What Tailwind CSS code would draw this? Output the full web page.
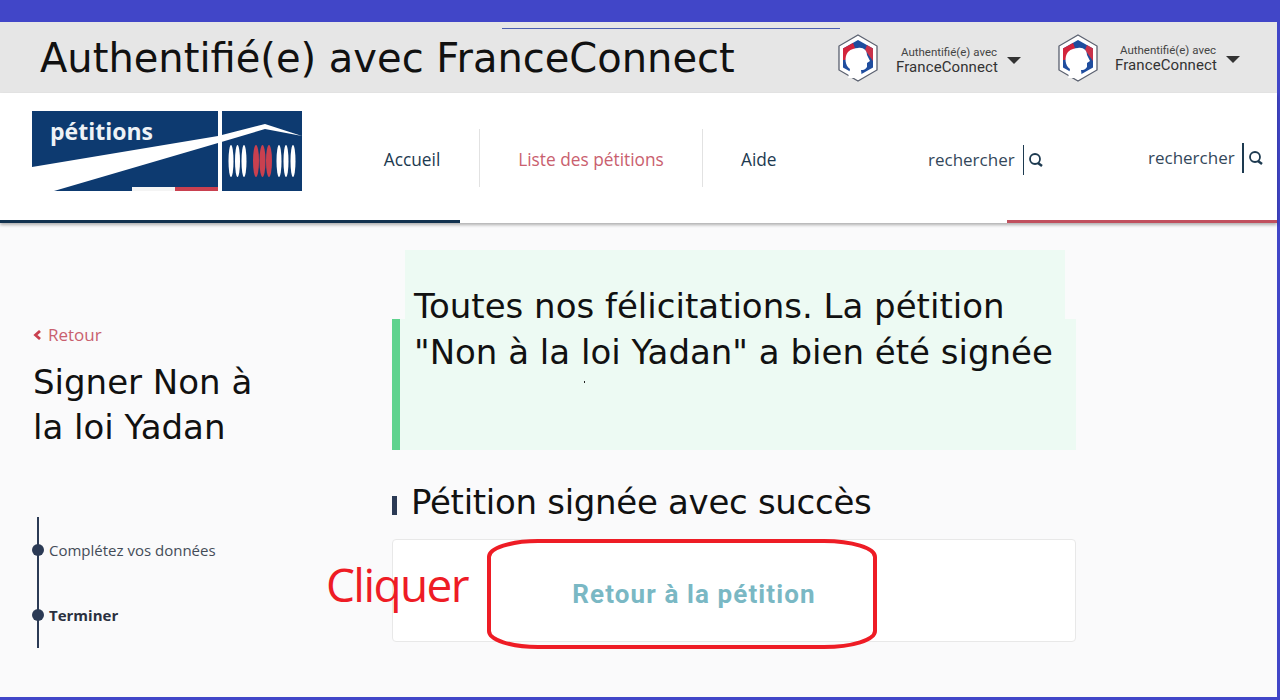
<!DOCTYPE html>
<html lang="fr">
  <head>
    <meta charset="UTF-8" />
    <title>Pétition signée</title>
    <script src="https://cdn.jsdelivr.net/npm/@tailwindcss/browser@4"></script>
  </head>
  <body class="w-[1280px] h-[700px] overflow-hidden bg-[#4146c8] font-['Open_Sans',sans-serif]">
    <div class="relative mt-[22px] mr-[3px] h-[675px] bg-[#fafafb]">
      <!-- FranceConnect bar -->
      <div class="relative flex items-center h-[71px] bg-[#e6e6e6]">
        <div class="absolute left-[502px] top-[6px] w-[338px] h-px bg-[#4a5fb0]"></div>
        <h2 class="ml-[40px] w-[796px] shrink-0 font-['DejaVu_Sans',sans-serif] text-[40px] leading-[46px] text-[#111]">Authentifié(e) avec FranceConnect</h2>
        <div class="flex items-center w-[220px] shrink-0 mt-[1px]">
          <svg class="w-[44px] h-[50px] shrink-0" viewBox="0 0 44 50">
            <path d="M22 2 41 13V37L22 48 3 37V13Z" fill="#fff" stroke="#5b6170" stroke-width="1.3" />
            <path d="M22 7 37 15.500V34.500L22 43 7 34.500V15.500Z" fill="#1f4d9e" />
            <path d="M7 15.500 17 10 19 15 9 27 7 27Z" fill="#d3243c" />
            <path d="M37 15.500 31 12 29 17 37 28Z" fill="#c8324a" />
            <path d="M22 15C27 14 31 17 31 22L34 28 31 30V34C29 37 27 37 25 37L26 45H12L14 36C9 33 8 24 12 19 15 16 19 15 22 15Z" fill="#fff" />
          </svg>
          <div class="ml-[14px] mt-[6px] w-[106px] shrink-0 text-center">
            <div class="pl-[4px] font-['Roboto',sans-serif] text-[11.500px] leading-[13px] text-[#444]">Authentifié(e) avec</div>
            <div class="font-['Roboto',sans-serif] text-[15px] leading-[17px] text-[#333] tracking-[0.1px]">FranceConnect</div>
          </div>
          <div class="ml-[7px] mt-[4px] border-x-[7px] border-t-[7px] border-x-transparent border-t-[#333]"></div>
        </div>
        <div class="flex items-center w-[220px] shrink-0">
          <svg class="w-[44px] h-[50px] shrink-0" viewBox="0 0 44 50">
            <path d="M22 2 41 13V37L22 48 3 37V13Z" fill="#fff" stroke="#5b6170" stroke-width="1.3" />
            <path d="M22 7 37 15.500V34.500L22 43 7 34.500V15.500Z" fill="#1f4d9e" />
            <path d="M7 15.500 17 10 19 15 9 27 7 27Z" fill="#d3243c" />
            <path d="M37 15.500 31 12 29 17 37 28Z" fill="#c8324a" />
            <path d="M22 15C27 14 31 17 31 22L34 28 31 30V34C29 37 27 37 25 37L26 45H12L14 36C9 33 8 24 12 19 15 16 19 15 22 15Z" fill="#fff" />
          </svg>
          <div class="ml-[13px] mt-[2px] w-[106px] shrink-0 text-center">
            <div class="pl-[4px] font-['Roboto',sans-serif] text-[11.500px] leading-[13px] text-[#444]">Authentifié(e) avec</div>
            <div class="font-['Roboto',sans-serif] text-[15px] leading-[17px] text-[#333] tracking-[0.1px]">FranceConnect</div>
          </div>
          <div class="ml-[7px] mt-[4px] border-x-[7px] border-t-[7px] border-x-transparent border-t-[#333]"></div>
        </div>
      </div>

      <!-- site header -->
      <header class="relative flex h-[130px] bg-white shadow-[0_2px_3px_rgba(0,0,0,0.3)]">
        <svg class="ml-[32px] mt-[18px] w-[270px] h-[80px] shrink-0 self-start" viewBox="0 0 270 80">
          <rect width="186" height="80" fill="#0d3a70" />
          <rect x="190" width="80" height="80" fill="#0d3a70" />
          <rect x="186" width="4" height="80" fill="#fff" />
          <path d="M0 56 186 25 233 13 270 25 233 18 186 32 22 80H0Z" fill="#fff" />
          <rect x="100" y="76" width="43" height="4" fill="#f4f4f4" />
          <rect x="143" y="76" width="43" height="4" fill="#c9404f" />
          <g fill="#fff">
            <ellipse cx="199" cy="50" rx="2.500" ry="16" /><ellipse cx="205.500" cy="50" rx="2.500" ry="16" /><ellipse cx="212" cy="50" rx="2.500" ry="16" />
            <ellipse cx="247" cy="50" rx="2.500" ry="16" /><ellipse cx="254" cy="50" rx="2.500" ry="16" /><ellipse cx="261" cy="50" rx="2.500" ry="16" />
          </g>
          <g fill="#c9404f">
            <ellipse cx="224" cy="50" rx="3" ry="16" /><ellipse cx="230.500" cy="50" rx="3" ry="16" /><ellipse cx="237" cy="50" rx="3" ry="16" />
          </g>
          <text x="18" y="29" fill="#eef2f6" font-family="Open Sans" font-weight="700" font-size="23">pétitions</text>
        </svg>
        <nav class="flex items-start mt-[36px] ml-[47px] w-[579px] shrink-0 text-[17.300px] h-[58px]">
          <a class="flex items-center justify-center h-full w-[131px] pt-[3px] pr-[4px] border-r border-[#e2e2e2] text-[#1d3a50]">Accueil</a>
          <a class="flex items-center justify-center h-full w-[223px] pt-[3px] border-r border-[#e2e2e2] text-[#c9606e]">Liste des pétitions</a>
          <a class="flex items-center h-full pl-[38px] pt-[3px] text-[#1d3a50]">Aide</a>
        </nav>
        <div class="flex items-center mt-[38px] h-[58px] w-[220px] shrink-0 text-[17px] text-[#33475a]">
          <span>rechercher</span>
          <span class="ml-[8px] w-px h-[30px] bg-[#1d3a50]"></span>
          <svg class="ml-[4px] w-[16px] h-[16px]" viewBox="0 0 16 16" fill="none" stroke="#1d3a50"><circle cx="7" cy="7" r="5" stroke-width="1.800" /><path d="M10 11 14 14" stroke-width="2.500" /></svg>
        </div>
        <div class="flex items-center mt-[36px] h-[58px] text-[17px] text-[#33475a]">
          <span>rechercher</span>
          <span class="ml-[7px] w-[2px] h-[30px] bg-[#1d3a50]"></span>
          <svg class="ml-[4px] w-[16px] h-[16px]" viewBox="0 0 16 16" fill="none" stroke="#1d3a50"><circle cx="7" cy="7" r="5" stroke-width="1.800" /><path d="M10 11 14 14" stroke-width="2.500" /></svg>
        </div>
        <div class="absolute left-0 bottom-0 w-[460px] h-[3px] bg-[#12324f]"></div>
        <div class="absolute right-0 bottom-0 w-[270px] h-[3px] bg-[#c0505e]"></div>
      </header>

      <!-- content -->
      <main class="flex">
        <aside class="w-[392px] pl-[33px] pt-[102px]">
          <a class="flex items-center h-[20px] text-[17px] text-[#c9606e]">
            <svg class="w-[9px] h-[10px] mr-[6px]" viewBox="0 0 9 10" fill="none" stroke="#c9404f" stroke-width="2.800"><path d="M7 1 2.500 5 7 9" /></svg>
            Retour
          </a>
          <h1 class="mt-[15px] font-['DejaVu_Sans',sans-serif] text-[34px] leading-[45px] text-[#111]">Signer Non à<br />la loi Yadan</h1>
          <ol class="relative mt-[67px] ml-[4px] h-[131px] w-[2px] bg-[#2b3a55]">
            <li class="absolute left-[-5px] top-[27px] flex items-center h-[12px] whitespace-nowrap text-[15px] text-[#444c58]">
              <span class="w-[12px] h-[12px] mr-[5px] rounded-full bg-[#2b3a55]"></span>Complétez vos données
            </li>
            <li class="absolute left-[-5px] top-[92px] flex items-center h-[12px] whitespace-nowrap text-[15px] font-bold text-[#2a3040]">
              <span class="w-[12px] h-[12px] mr-[5px] rounded-full bg-[#2b3a55]"></span>Terminer
            </li>
          </ol>
        </aside>

        <section class="w-[684px] pt-[27px] font-['DejaVu_Sans',sans-serif] text-[#111]">
          <div class="relative z-10 ml-[13px] w-[660px] h-[69px] bg-[#edfaf3] pl-[9px] pt-[35px] text-[34px] leading-[42px] whitespace-nowrap">Toutes nos félicitations. La pétition</div>
          <div class="relative h-[131px] bg-[#edfaf3] border-l-[8px] border-[#5fd38e] pl-[14px] pt-[12px] text-[34px] leading-[42px] whitespace-nowrap">
            "Non à la loi Yadan" a bien été signée
            <span class="absolute left-[184px] top-[62px] w-px h-[2px] bg-[#222]"></span>
          </div>
          <div class="flex items-center mt-[30px] h-[44px]">
            <span class="w-[5px] h-[19px] mt-[6px] bg-[#2b3a55]"></span>
            <h2 class="ml-[14px] text-[34px] leading-[44px] tracking-[-0.3px]">Pétition signée avec succès</h2>
          </div>
          <div class="flex items-center justify-center mt-[15px] h-[103px] pr-[80px] rounded-[4px] border border-[#e8e8e8] bg-white">
            <a class="mt-[8px] font-['Roboto',sans-serif] font-bold text-[26px] tracking-[1.1px] text-[#7ab8c4]">Retour à la pétition</a>
          </div>
        </section>
      </main>

      <!-- annotations added over the page -->
      <span class="absolute left-[326px] top-[532px] text-[46px] leading-[60px] tracking-[-1.600px] text-[#ee1c25]">Cliquer</span>
      <svg class="absolute left-[486px] top-[516px] w-[392px] h-[112px]" viewBox="0 0 392 112" fill="none">
        <path d="M52 3H338A51 16 0 0 1 389 19V93A51 16 0 0 1 338 109H52A49 16 0 0 1 3 93V19A49 16 0 0 1 52 3Z" stroke="#ee1c25" stroke-width="4" />
      </svg>
    </div>
  </body>
</html>
